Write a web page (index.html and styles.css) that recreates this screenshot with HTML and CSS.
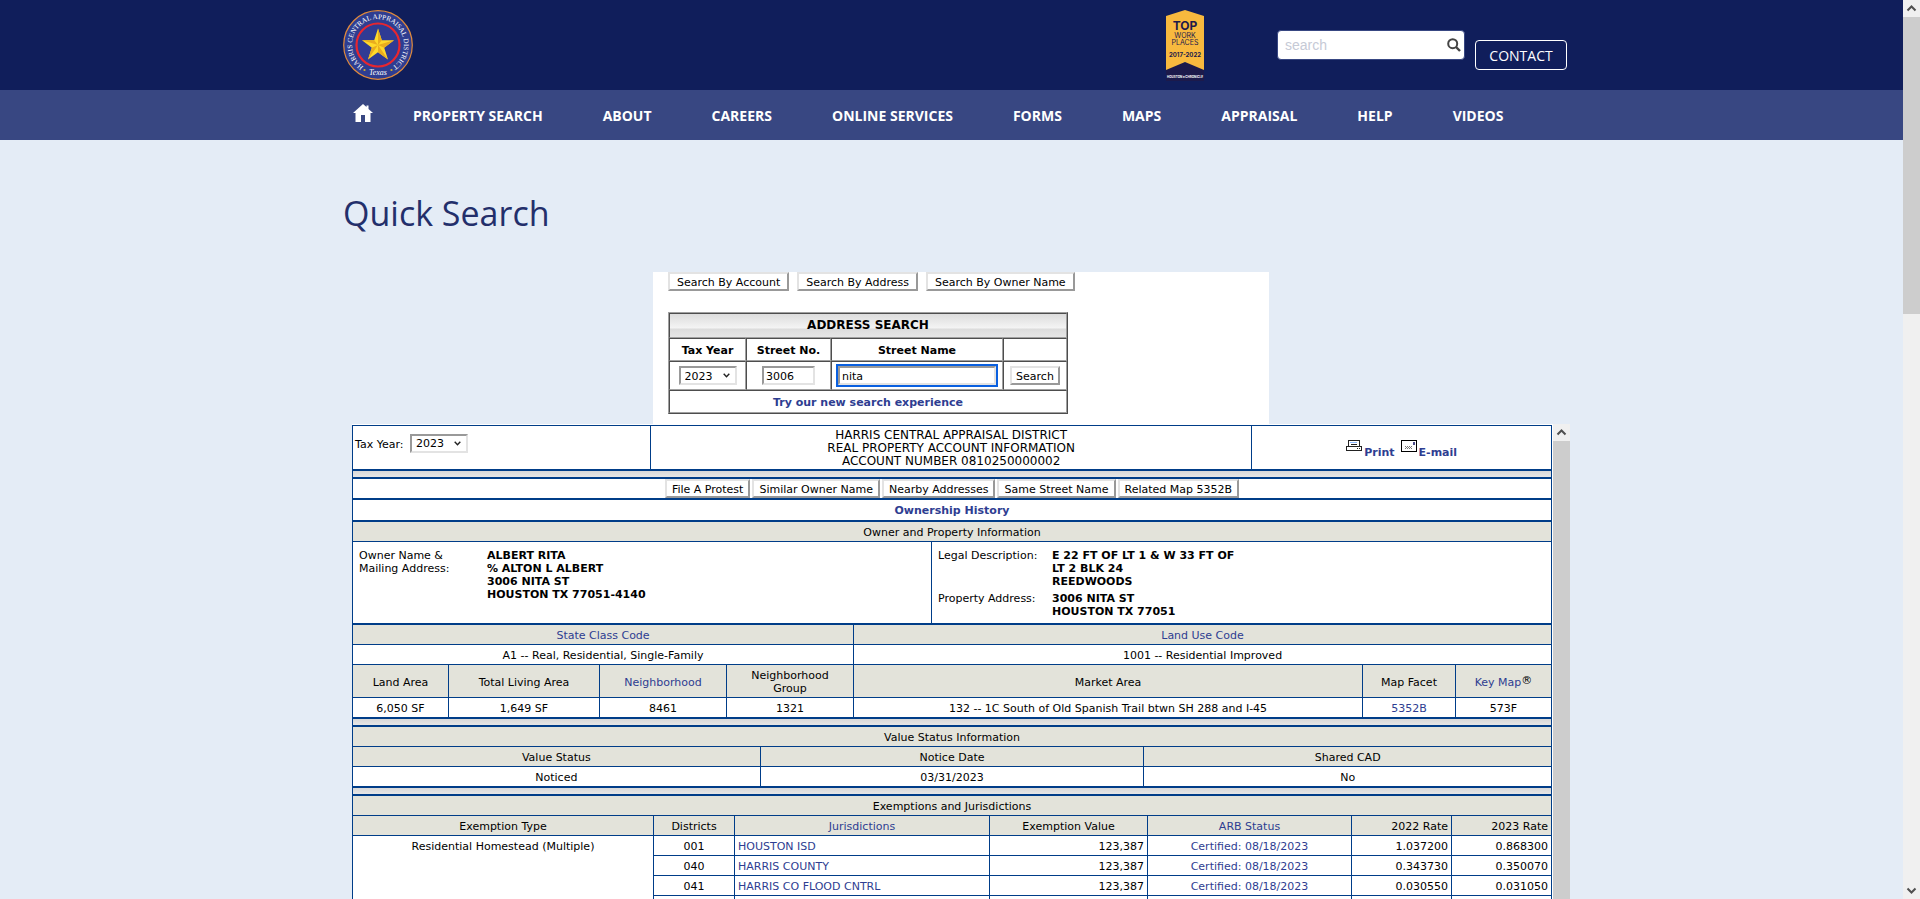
FILE: index.html
```html
<!DOCTYPE html>
<html lang="en">
<head>
  <meta charset="UTF-8">
  <title>HCAD - Quick Search</title>
  <meta name="viewport" content="width=device-width, initial-scale=1.0">
  <link rel="stylesheet" href="styles.css">
</head>
<body>
  <div class="page">
    <header class="top">
      <div class="container top-inner">
        <a class="logo" href="#" aria-label="Harris Central Appraisal District">
          <svg width="70" height="70" viewBox="0 0 70 70">
            <defs>
              <path id="ring" d="M22 57.500A26 26 0 1 1 48 57.500"/>
            </defs>
            <circle cx="35" cy="35" r="34.300" fill="#2e3d91" stroke="#e08a3c" stroke-width="1.200"/>
            <circle cx="35" cy="35" r="21.500" fill="#2f3b94" stroke="#e8262f" stroke-width="2.200"/>
            <path fill="#ffd92b" d="M35 18.500L38.800 30.300H51L41.200 37.700L45 49.500L35 42.200L25 49.500L28.800 37.700L19 30.300H31.200Z"/>
            <path fill="#e9ad1e" d="M35 18.500L38.800 30.300L35 35ZM51 30.300L41.200 37.700L35 35ZM45 49.500L35 42.200V35ZM25 49.500L28.800 37.700L35 35ZM19 30.300H31.200L35 35Z"/>
            <circle cx="21.500" cy="60" r="1.100" fill="#d9b32c"/>
            <circle cx="48.500" cy="60" r="1.100" fill="#d9b32c"/>
            <text class="seal-text"><textPath href="#ring" startOffset="50%" text-anchor="middle">HARRIS CENTRAL APPRAISAL DISTRICT</textPath></text>
            <text class="seal-state" x="35" y="65" text-anchor="middle">Texas</text>
          </svg>
        </a>
        <div class="tools">
          <svg class="badge" width="40" height="74" viewBox="0 0 40 74">
            <path fill="#1c1a4b" d="M1 54h38v18H1z"/>
            <path fill="#f8b93e" d="M1 7L20 1L39 7V61L20 53L1 61Z"/>
            <g fill="#1c1a4b" text-anchor="middle">
              <text class="badge-top" x="20" y="21">TOP</text>
              <text class="badge-line" x="20" y="29">WORK</text>
              <text class="badge-line" x="20" y="36">PLACES</text>
              <text class="badge-year" x="20" y="48">2017-2022</text>
            </g>
            <text class="badge-foot" x="20" y="69" text-anchor="middle" fill="#fff">HOUSTON★CHRONICLE</text>
          </svg>
          <form class="site-search">
            <input type="text" placeholder="search" aria-label="Search site">
            <button type="button" aria-label="Go">
              <svg width="14" height="14" viewBox="0 0 14 14"><circle cx="5.700" cy="5.700" r="4.500" fill="none" stroke="#444" stroke-width="2"/><path d="M9 9L13 13" stroke="#444" stroke-width="2.400"/></svg>
            </button>
          </form>
          <a class="contact" href="#">CONTACT</a>
        </div>
      </div>
    </header>

    <nav class="menu">
      <div class="container menu-inner">
        <a class="home" href="#" aria-label="Home">
          <svg width="20" height="18" viewBox="0 0 20 18"><path fill="#fff" d="M10 0L13.500 3V1.500H15.500V5L20 9H17.500V18H12V11H8V18H2.500V9H0Z"/></svg>
        </a>
        <a href="#">PROPERTY SEARCH</a>
        <a href="#">ABOUT</a>
        <a href="#">CAREERS</a>
        <a href="#">ONLINE SERVICES</a>
        <a href="#">FORMS</a>
        <a href="#">MAPS</a>
        <a href="#">APPRAISAL</a>
        <a href="#">HELP</a>
        <a href="#">VIDEOS</a>
      </div>
    </nav>

    <main class="container">
      <h1>Quick Search</h1>

      <div class="records">
        <section class="search-panel">
          <div class="search-tabs">
            <button type="button">Search By Account</button>
            <button type="button">Search By Address</button>
            <button type="button">Search By Owner Name</button>
          </div>
          <table class="search-table">
            <colgroup><col class="s-year"><col class="s-no"><col class="s-name"><col></colgroup>
            <tr class="search-title"><th colspan="4">ADDRESS SEARCH</th></tr>
            <tr class="search-labels">
              <th><label for="taxyear">Tax Year</label></th>
              <th><label for="stnum">Street No.</label></th>
              <th><label for="stname">Street Name</label></th>
              <th></th>
            </tr>
            <tr class="search-fields">
              <td><select id="taxyear"><option>2023</option></select></td>
              <td><input type="text" id="stnum" class="stnum" value="3006"></td>
              <td><input type="text" id="stname" class="stname" value="nita"></td>
              <td><button type="button">Search</button></td>
            </tr>
            <tr class="search-more"><td colspan="4"><a href="#">Try our new search experience</a></td></tr>
          </table>
        </section>

        <div class="frame">
          <div class="frame-doc">
            <table class="info heading">
              <colgroup><col class="h-year"><col><col class="h-share"></colgroup>
              <tr>
                <td class="year-cell"><label for="year">Tax Year:</label> <select id="year"><option>2023</option></select></td>
                <td class="account">HARRIS CENTRAL APPRAISAL DISTRICT<br>REAL PROPERTY ACCOUNT INFORMATION<br>ACCOUNT NUMBER 0810250000002</td>
                <td>
                  <div class="share">
                    <svg width="16" height="12" viewBox="0 0 16 12" shape-rendering="crispEdges"><path fill="#fff" stroke="#222" d="M2.500 .5H13.500V6.500H2.500ZM.5 6.500H15.500V10.500H.5Z"/><path fill="#8cb8ff" d="M4 2h7v1H4z"/><path fill="#222" d="M5 4h6v1H5zM11 8h1v1h-1zM13 8h1v1h-1z"/></svg>
                    <a href="#">Print</a>
                    <svg class="mail" width="16" height="12" viewBox="0 0 16 12" shape-rendering="crispEdges"><path fill="#fff" stroke="#000" d="M.5 .5H15.500V11.500H.5Z"/><path fill="#4a4a8a" d="M12 2h2v3h-2z"/><path fill="#777" d="M4 6h1v1H4zM6 6h1v1H6zM8 6h1v1H8zM10 6h1v1h-1zM5 7h1v1H5zM7 7h1v1H7zM9 7h1v1H9zM4 8h1v1H4zM6 8h1v1H6zM8 8h1v1H8zM10 8h1v1h-1z"/></svg>
                    <a href="#">E-mail</a>
                  </div>
                </td>
              </tr>
            </table>
            <div class="spacer"></div>
            <div class="bar actions">
              <button type="button">File A Protest</button>
              <button type="button">Similar Owner Name</button>
              <button type="button">Nearby Addresses</button>
              <button type="button">Same Street Name</button>
              <button type="button">Related Map 5352B</button>
            </div>
            <div class="bar history"><a href="#">Ownership History</a></div>

            <table class="info owner">
              <colgroup><col class="w-owner"><col></colgroup>
              <tr><th colspan="2">Owner and Property Information</th></tr>
              <tr class="owner-row">
                <td>
                  <dl class="owner-name">
                    <dt>Owner Name &amp;<br>Mailing Address:</dt>
                    <dd>ALBERT RITA<br>% ALTON L ALBERT<br>3006 NITA ST<br>HOUSTON TX 77051-4140</dd>
                  </dl>
                </td>
                <td>
                  <dl class="legal">
                    <dt>Legal Description:</dt>
                    <dd>E 22 FT OF LT 1 &amp; W 33 FT OF<br>LT 2 BLK 24<br>REEDWOODS</dd>
                    <dt>Property Address:</dt>
                    <dd>3006 NITA ST<br>HOUSTON TX 77051</dd>
                  </dl>
                </td>
              </tr>
            </table>

            <table class="info land">
              <colgroup><col class="l-area"><col class="l-living"><col class="l-hood"><col class="l-hood"><col><col class="l-facet"><col class="l-key"></colgroup>
              <tr><th colspan="4"><a href="#">State Class Code</a></th><th colspan="3"><a href="#">Land Use Code</a></th></tr>
              <tr><td colspan="4">A1 -- Real, Residential, Single-Family</td><td colspan="3">1001 -- Residential Improved</td></tr>
              <tr class="tall">
                <th>Land Area</th><th>Total Living Area</th><th><a href="#">Neighborhood</a></th><th>Neighborhood<br>Group</th>
                <th>Market Area</th><th>Map Facet</th><th><a href="#">Key Map</a><sup>®</sup></th>
              </tr>
              <tr>
                <td>6,050 SF</td><td>1,649 SF</td><td>8461</td><td>1321</td>
                <td>132 -- 1C South of Old Spanish Trail btwn SH 288 and I-45</td><td><a href="#">5352B</a></td><td>573F</td>
              </tr>
            </table>
            <div class="spacer"></div>

            <table class="info">
              <colgroup><col class="w34"><col><col class="w34"></colgroup>
              <tr><th colspan="3">Value Status Information</th></tr>
              <tr><th>Value Status</th><th>Notice Date</th><th>Shared CAD</th></tr>
              <tr><td>Noticed</td><td>03/31/2023</td><td>No</td></tr>
            </table>
            <div class="spacer"></div>

            <table class="info rates">
              <colgroup><col class="r-type"><col class="r-dist"><col class="r-jur"><col class="r-value"><col><col class="r-rate"><col class="r-rate"></colgroup>
              <tr><th colspan="7">Exemptions and Jurisdictions</th></tr>
              <tr>
                <th>Exemption Type</th><th>Districts</th><th><a href="#">Jurisdictions</a></th><th>Exemption Value</th>
                <th><a href="#">ARB Status</a></th><th class="num">2022 Rate</th><th class="num">2023 Rate</th>
              </tr>
              <tr>
                <td rowspan="4" class="type">Residential Homestead (Multiple)</td>
                <td>001</td><td class="name"><a href="#">HOUSTON ISD</a></td><td class="num">123,387</td>
                <td><a href="#">Certified: 08/18/2023</a></td><td class="num">1.037200</td><td class="num">0.868300</td>
              </tr>
              <tr>
                <td>040</td><td class="name"><a href="#">HARRIS COUNTY</a></td><td class="num">123,387</td>
                <td><a href="#">Certified: 08/18/2023</a></td><td class="num">0.343730</td><td class="num">0.350070</td>
              </tr>
              <tr>
                <td>041</td><td class="name"><a href="#">HARRIS CO FLOOD CNTRL</a></td><td class="num">123,387</td>
                <td><a href="#">Certified: 08/18/2023</a></td><td class="num">0.030550</td><td class="num">0.031050</td>
              </tr>
              <tr><td></td><td></td><td></td><td></td><td></td><td></td></tr>
            </table>
          </div>
          <div class="scrollbar frame-scroll">
            <svg class="arrow" width="17" height="17" viewBox="0 0 17 17"><path d="M4.500 10.500L8.500 6.500L12.500 10.500" fill="none" stroke="#505050" stroke-width="2"/></svg>
            <div class="thumb"></div>
          </div>
        </div>
      </div>
    </main>
  </div>

  <div class="scrollbar page-scroll">
    <svg class="arrow" width="17" height="17" viewBox="0 0 17 17"><path d="M4.500 10.500L8.500 6.500L12.500 10.500" fill="none" stroke="#505050" stroke-width="2"/></svg>
    <div class="thumb"></div>
    <svg class="arrow" width="17" height="17" viewBox="0 0 17 17"><path d="M4.500 6.500L8.500 10.500L12.500 6.500" fill="none" stroke="#505050" stroke-width="2"/></svg>
  </div>
</body>
</html>
```
FILE: styles.css
```css
* {
  box-sizing: border-box;
}
body {
  margin: 0;
  display: flex;
  height: 100vh;
  overflow: hidden;
  background: #e4ecf6;
  color: #000;
  font-family: "Open Sans", sans-serif;
  font-size: 14px;
}
a {
  color: #2e3d91;
  text-decoration: none;
}
.page {
  flex: 1;
  display: flex;
  flex-direction: column;
  overflow: hidden;
}
.container {
  width: 100%;
  max-width: 1231px;
  margin: 0 auto;
  padding-left: 7px;
}

/* header */
.top {
  background: #101e5b;
}
.top-inner {
  display: flex;
  justify-content: space-between;
  height: 90px;
}
.logo {
  padding-top: 10px;
}
.seal-text {
  font-family: "Liberation Serif", serif;
  font-size: 7px;
  fill: #fff;
}
.seal-state {
  font-family: "Liberation Serif", serif;
  font-size: 8px;
  font-style: italic;
  fill: #fff;
}
.tools {
  display: flex;
  align-items: flex-start;
}
.badge {
  margin: 9px 72px 0 0;
}
.badge-top {
  font: bold 12px Inter, sans-serif;
}
.badge-line {
  font: 7px Inter, sans-serif;
}
.badge-year {
  font: bold 6px Inter, sans-serif;
}
.badge-foot {
  font: bold 3px Inter, sans-serif;
}
.site-search {
  display: flex;
  align-items: center;
  width: 188px;
  height: 30px;
  margin: 30px 10px 0 0;
  background: #fff;
  border: 1px solid #384782;
  border-radius: 4px;
}
.site-search input {
  flex: 1;
  min-width: 0;
  padding: 0 7px;
  border: 0;
  background: none;
  font: 14px "Liberation Sans", sans-serif;
}
.site-search input::placeholder {
  color: #c6cad6;
}
.site-search button {
  display: flex;
  padding: 0 3px 0 0;
  border: 0;
  background: none;
}
.contact {
  width: 92px;
  height: 30px;
  margin-top: 40px;
  border: 1px solid #fff;
  border-radius: 4px;
  color: #fff;
  line-height: 30px;
  text-align: center;
}

/* main menu */
.menu {
  background: #384782;
}
.menu-inner {
  display: flex;
  height: 50px;
  line-height: 52px;
}
.menu a {
  margin-right: 60px;
  color: #fff;
  font-weight: bold;
  white-space: nowrap;
}
.menu .home {
  margin: 0 40px 0 10px;
  padding-top: 14px;
  line-height: 0;
}

main {
  flex: 1;
  display: flex;
  flex-direction: column;
  min-height: 0;
}
h1 {
  margin: 48px 0 34px;
  color: #232f6b;
  font-size: 34px;
  font-weight: normal;
  line-height: 50px;
}

/* old records application */
.records {
  flex: 1;
  display: flex;
  flex-direction: column;
  min-height: 0;
  margin: 0 -3px 0 9px;
  font-family: "DejaVu Sans", sans-serif;
  font-size: 11px;
  line-height: 13px;
}
.records button,
.records input,
.records select {
  height: 19px;
  margin: 0;
  font: 11px "DejaVu Sans", sans-serif;
  color: #000;
  background: #fff;
  border: 2px solid;
  border-radius: 0;
}
.records button {
  padding: 1px 4px 0;
  border-color: #e3e3e3 #999 #999 #e3e3e3;
}
.records input,
.records select {
  border-color: #999 #e3e3e3 #e3e3e3 #999;
}
.records input {
  padding: 1px 2px 0;
}
.records select {
  width: 58px;
  padding: 1px 4px 0;
  appearance: none;
  background: #fff url("data:image/svg+xml,%3Csvg xmlns='http://www.w3.org/2000/svg' width='7' height='5'%3E%3Cpath d='M.7.7L3.5 3.700L6.300.7' fill='none' stroke='%23222' stroke-width='1.400'/%3E%3C/svg%3E") no-repeat right 5px center;
}
.search-panel {
  width: 616px;
  height: 152px;
  margin: 0 auto;
  padding-left: 15px;
  background: #fff;
}
.search-tabs {
  display: flex;
  gap: 8px;
  margin-bottom: 21px;
}
.search-tabs button {
  padding: 1px 7px 0;
}
.search-table {
  width: 400px;
  table-layout: fixed;
  border: 1px solid;
  border-color: #a0a0a0 #4d4d4d #4d4d4d #a0a0a0;
  border-spacing: 0;
}
.search-table th,
.search-table td {
  padding: 0;
  border: 1px solid;
  border-color: #4d4d4d #a0a0a0 #a0a0a0 #4d4d4d;
  text-align: center;
}
.s-year {
  width: 77px;
}
.s-no {
  width: 85px;
}
.s-name {
  width: 172px;
}
.search-title th {
  height: 25px;
  background: linear-gradient(#dcdcdc, #f4f4f4 60%, #dcdcdc 66%, #e6e6e6);
  font-size: 12px;
}
.search-labels th {
  height: 23px;
  padding-top: 1px;
}
.search-fields td {
  height: 29px;
}
.search-more td {
  height: 23px;
  padding-top: 1px;
  font-weight: bold;
}
.stnum {
  width: 53px;
}
.stname {
  width: 158px;
  outline: 2px solid #0a60e0;
  outline-offset: 0;
}

.frame {
  flex: 1;
  display: flex;
  min-height: 0;
  background: #fff;
  overflow: hidden;
}
.frame-doc {
  flex: 1;
  padding: 1px 1px 0 0;
}
.info {
  width: 100%;
  table-layout: fixed;
  border: 1px solid #003d88;
  border-top: 0;
  border-left: 0;
  border-spacing: 0;
}
.info th,
.info td {
  height: 20px;
  padding: 2px 3px 0;
  border: 1px solid #003d88;
  border-right: 0;
  border-bottom: 0;
  font-weight: normal;
  text-align: center;
}
.info th {
  background: #e3e3da;
}
.info .num {
  text-align: right;
}
.info .name {
  text-align: left;
}
.w34 {
  width: 34%;
}
.h-year {
  width: 298px;
}
.h-share {
  width: 25%;
}
.heading td {
  height: 44px;
}
.heading .year-cell {
  padding: 0 2px 9px;
  text-align: left;
}
.year-cell select {
  margin-left: 3px;
}
.heading .account {
  font-size: 12px;
}
.share {
  display: flex;
  justify-content: center;
  align-items: flex-start;
  gap: 2px;
  padding-top: 2px;
  font-weight: bold;
}
.share a {
  padding-top: 6px;
}
.share .mail {
  margin-left: 4px;
}
.spacer {
  height: 8px;
  border: 1px solid #003d88;
  background: linear-gradient(#d8d8d8, #e6e6e6);
}
.bar {
  display: flex;
  justify-content: center;
  border: 1px solid #003d88;
  background: #fff;
}
.actions {
  gap: 2px;
  height: 21px;
}
.actions button {
  padding: 1px 5px 0;
}
.history {
  height: 22px;
  line-height: 22px;
  font-weight: bold;
}
.w-owner {
  width: 579px;
}
.owner .owner-row td {
  height: 82px;
  padding: 7px 6px 0;
  vertical-align: top;
  text-align: left;
}
.owner dl {
  display: grid;
  gap: 4px 0;
  margin: 0;
}
.owner-name {
  grid-template-columns: 128px 1fr;
}
.legal {
  grid-template-columns: 114px 1fr;
}
.owner dd {
  margin: 0;
  font-weight: bold;
}
.l-area {
  width: 96px;
}
.l-living {
  width: 151px;
}
.l-hood {
  width: 127px;
}
.l-facet {
  width: 93px;
}
.l-key {
  width: 96px;
}
.info .tall th {
  height: 33px;
}
sup {
  font-size: 11px;
  line-height: 0;
  vertical-align: 2px;
}
.r-type {
  width: 301px;
}
.r-dist {
  width: 81px;
}
.r-jur {
  width: 255px;
}
.r-value {
  width: 158px;
}
.r-rate {
  width: 100px;
}
.rates .type {
  padding-top: 4px;
  vertical-align: top;
}

/* scrollbars */
.scrollbar {
  display: flex;
  flex-direction: column;
  width: 17px;
  background: #f0f0f0;
}
.scrollbar .arrow {
  flex: none;
}
.scrollbar .thumb {
  background: #cdcdcd;
}
.page-scroll {
  justify-content: space-between;
}
.page-scroll .thumb {
  height: 33%;
  margin-bottom: auto;
}
.frame-scroll .thumb {
  flex: 1;
}
```
